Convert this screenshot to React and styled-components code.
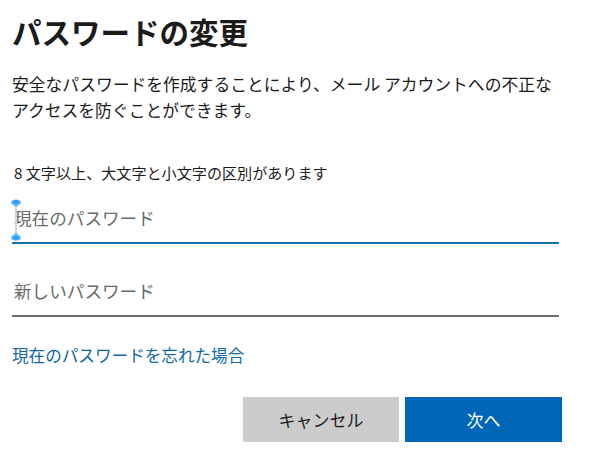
import React from "react";
import styled, { createGlobalStyle } from "styled-components";

const Global = createGlobalStyle`
  html, body { margin: 0; padding: 0; background: #fff; }
  body { font-family: "Noto Sans CJK JP", "Noto Sans", sans-serif; color: #1b1b1b; }
  * { box-sizing: border-box; }
`;

const Page = styled.div`
  width: 550px;
  margin-left: 12px;
  padding-top: 11px;
  display: flex;
  flex-direction: column;
`;

const Title = styled.h1`
  margin: 0;
  font-size: 29.5px;
  line-height: 40px;
  font-weight: 700;
  color: #1b1b1b;
`;

const Desc = styled.p`
  margin: 20px 0 0;
  font-size: 16.8px;
  line-height: 26px;
  color: #1b1b1b;
`;

const Hint = styled.p`
  margin: 38px 0 0 2px;
  font-size: 15.1px;
  line-height: 22px;
  color: #1b1b1b;
`;

const Field = styled.div`
  position: relative;
  width: 547px;
  margin-top: ${(p) => p.$mt}px;
`;

const Input = styled.input`
  display: block;
  width: 100%;
  height: 52px;
  padding: 0 0 0 2px;
  border: none;
  border-bottom: 2px solid ${(p) => (p.$focused ? "#1a6fa8" : "#6f6f6f")};
  outline: none;
  font-family: inherit;
  font-size: 17.6px;
  background: transparent;
  &::placeholder { color: #6b6b6b; }
`;

const Handles = styled.svg`
  position: absolute;
  left: -4px;
  top: 5px;
  pointer-events: none;
`;

const Link = styled.a`
  margin-top: 26px;
  font-size: 16.6px;
  line-height: 24px;
  color: #0f67a8;
  text-decoration: none;
  align-self: flex-start;
`;

const Actions = styled.div`
  margin-top: 30px;
  display: flex;
  justify-content: flex-end;
  gap: 6px;
`;

const Button = styled.button`
  width: ${(p) => p.$w}px;
  height: 45px;
  border: none;
  font-family: inherit;
  font-size: 17px;
  color: ${(p) => (p.$primary ? "#fff" : "#1b1b1b")};
  background: ${(p) => (p.$primary ? "#0067b8" : "#cccccc")};
`;

export default function App() {
  return (
    <>
      <Global />
      <Page>
        <Title>パスワードの変更</Title>
        <Desc>
          安全なパスワードを作成することにより、メール アカウントへの不正な
          <br />
          アクセスを防ぐことができます。
        </Desc>
        <Hint>8 文字以上、大文字と小文字の区別があります</Hint>
        <Field $mt={9}>
          <Input type="password" placeholder="現在のパスワード" $focused />
          <Handles width="16" height="46" viewBox="0 0 16 46">
            <line x1="8" y1="9" x2="8" y2="37" stroke="#d4d4d4" strokeWidth="2" />
            <path d="M3 5 C3 1.5 13 1.5 13 5 C13 7 10.5 8.5 8 10 C5.5 8.5 3 7 3 5 Z" fill="#62bdf6" />
            <ellipse cx="8" cy="5" rx="3" ry="1.8" fill="#2f9ae8" />
            <path d="M3 41 C3 44.5 13 44.5 13 41 C13 39 10.5 37.5 8 36 C5.5 37.5 3 39 3 41 Z" fill="#62bdf6" />
            <ellipse cx="8" cy="41" rx="3" ry="1.8" fill="#2f9ae8" />
          </Handles>
        </Field>
        <Field $mt={21}>
          <Input type="password" placeholder="新しいパスワード" />
        </Field>
        <Link href="#">現在のパスワードを忘れた場合</Link>
        <Actions>
          <Button $w={156}>キャンセル</Button>
          <Button $w={157} $primary>次へ</Button>
        </Actions>
      </Page>
    </>
  );
}
